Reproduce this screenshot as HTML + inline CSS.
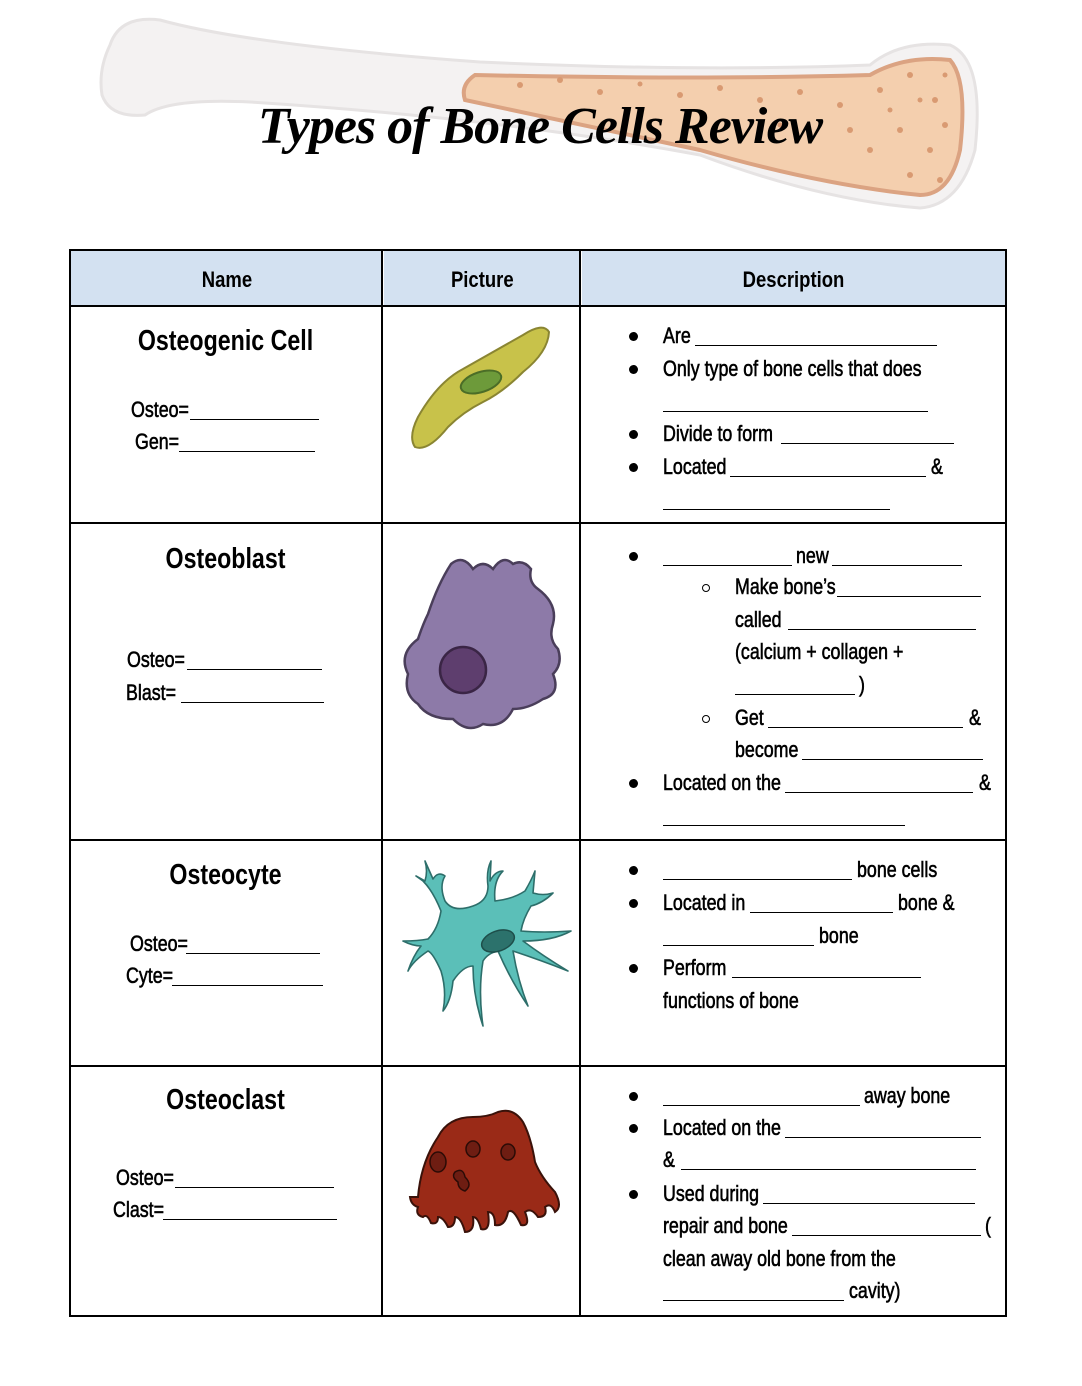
<!DOCTYPE html>
<html><head><meta charset="utf-8"><style>
body{margin:0;background:#fff;width:1082px;height:1386px;position:relative;overflow:hidden;font-family:"Liberation Sans Narrow","Liberation Sans",sans-serif;color:#000}
.t{position:absolute;font-size:22px;line-height:26px;white-space:nowrap;-webkit-text-stroke:0.6px #000;transform:scaleX(0.81);transform-origin:left center}
.h{position:absolute;font-size:29px;font-weight:bold;line-height:34px;width:313px;text-align:center;left:69px;transform:scaleX(0.8);transform-origin:center}
.b{position:absolute;height:0;border-top:1.6px solid #000}
.d{position:absolute;width:9px;height:9px;border-radius:50%;background:#000}
.o{position:absolute;width:8px;height:8px;border-radius:50%;border:1.3px solid #000;box-sizing:border-box}
.v{position:absolute;background:#000}
.th{position:absolute;top:251px;height:54px;background:#d3e1f1;font-weight:bold;font-size:22px;line-height:58px;text-align:center}
.th span{display:inline-block;transform:scaleX(0.84)}
</style></head><body>
<svg style="position:absolute;left:0;top:0" width="1082" height="215">
<path d="M110 45 Q120 15 160 20 Q250 45 480 62 Q700 72 870 65 Q900 40 950 45 Q985 60 975 150 Q960 205 920 208 Q820 200 700 155 Q500 118 250 102 Q170 98 145 115 Q110 118 102 95 Q98 70 110 45 Z" fill="#f4f2f2" stroke="#e6e3e3" stroke-width="3"/>
<path d="M475 75 Q700 80 870 75 Q905 55 950 60 Q968 80 960 150 Q950 195 920 195 Q820 185 700 150 Q560 120 465 100 Q460 85 475 75 Z" fill="#f4cfae" stroke="#dba382" stroke-width="4"/>
<g fill="#d99a72">
<circle cx="520" cy="85" r="3"/><circle cx="560" cy="80" r="3"/><circle cx="600" cy="92" r="3"/><circle cx="640" cy="84" r="2.5"/><circle cx="680" cy="95" r="3"/><circle cx="720" cy="88" r="3"/><circle cx="760" cy="100" r="3"/><circle cx="800" cy="92" r="3"/><circle cx="840" cy="105" r="3"/><circle cx="880" cy="90" r="3"/><circle cx="910" cy="75" r="3"/><circle cx="935" cy="100" r="3"/><circle cx="900" cy="130" r="3"/><circle cx="930" cy="150" r="3"/><circle cx="870" cy="150" r="3"/><circle cx="910" cy="175" r="3"/><circle cx="945" cy="125" r="3"/><circle cx="850" cy="130" r="3"/><circle cx="780" cy="125" r="2.5"/><circle cx="940" cy="180" r="3"/><circle cx="920" cy="100" r="2.5"/><circle cx="890" cy="110" r="2.5"/><circle cx="945" cy="75" r="2.5"/>
</g>
<text x="540" y="143" text-anchor="middle" font-family="Liberation Serif" font-style="italic" font-weight="bold" font-size="52" letter-spacing="-1">Types of Bone Cells Review</text>
</svg>

<div class="th" style="left:71px;width:311px"><span>Name</span></div>
<div class="th" style="left:384px;width:196px"><span>Picture</span></div>
<div class="th" style="left:582px;width:423px"><span>Description</span></div>
<div class="v" style="left:69px;top:249px;width:938px;height:2px"></div>
<div class="v" style="left:69px;top:305px;width:938px;height:2px"></div>
<div class="v" style="left:69px;top:522px;width:938px;height:2px"></div>
<div class="v" style="left:69px;top:839px;width:938px;height:2px"></div>
<div class="v" style="left:69px;top:1065px;width:938px;height:2px"></div>
<div class="v" style="left:69px;top:1315px;width:938px;height:2px"></div>
<div class="v" style="left:69px;top:249px;width:2px;height:1068px"></div>
<div class="v" style="left:381px;top:249px;width:2px;height:1068px"></div>
<div class="v" style="left:579px;top:249px;width:2px;height:1068px"></div>
<div class="v" style="left:1005px;top:249px;width:2px;height:1068px"></div>

<div class="h" style="top:324px">Osteogenic Cell</div>
<div class="t" style="left:131px;top:397px">Osteo=</div><div class="b" style="left:190px;width:129px;top:419px"></div>
<div class="t" style="left:135px;top:429px">Gen=</div><div class="b" style="left:179px;width:136px;top:451px"></div>

<div class="h" style="top:542px">Osteoblast</div>
<div class="t" style="left:127px;top:647px">Osteo=</div><div class="b" style="left:187px;width:135px;top:669px"></div>
<div class="t" style="left:126px;top:680px">Blast=</div><div class="b" style="left:181px;width:143px;top:702px"></div>

<div class="h" style="top:858px">Osteocyte</div>
<div class="t" style="left:130px;top:931px">Osteo=</div><div class="b" style="left:186px;width:134px;top:953px"></div>
<div class="t" style="left:126px;top:963px">Cyte=</div><div class="b" style="left:172px;width:151px;top:985px"></div>

<div class="h" style="top:1083px">Osteoclast</div>
<div class="t" style="left:116px;top:1165px">Osteo=</div><div class="b" style="left:175px;width:159px;top:1187px"></div>
<div class="t" style="left:113px;top:1197px">Clast=</div><div class="b" style="left:163px;width:174px;top:1219px"></div>

<svg style="position:absolute;left:383px;top:307px" width="196" height="215">
<path d="M32 140 Q25 130 35 110 Q55 75 80 62 Q110 45 140 28 Q160 15 166 25 Q165 45 140 65 Q120 85 100 95 Q80 105 65 120 Q45 145 32 140Z" fill="#c8c24a" stroke="#8a8532" stroke-width="2"/>
<ellipse cx="98" cy="75" rx="21" ry="10" transform="rotate(-18 98 75)" fill="#6d9a3a" stroke="#4b6d27" stroke-width="2"/>
</svg>
<svg style="position:absolute;left:383px;top:524px" width="196" height="315">
<path d="M68 40 Q80 30 90 45 Q100 35 110 45 Q120 30 130 40 Q140 35 148 45 Q145 58 155 65 Q175 80 170 100 Q165 115 175 125 Q180 140 170 150 Q178 170 160 175 Q145 185 130 185 Q120 205 100 200 Q85 210 70 195 Q45 195 35 180 Q20 170 25 150 Q15 130 35 115 Q40 100 45 90 Q55 60 68 40Z" fill="#8d7aa8" stroke="#4a3e5a" stroke-width="2.5"/>
<ellipse cx="80" cy="146" rx="23" ry="23" fill="#5e3e6e" stroke="#3a2545" stroke-width="2.5"/>
</svg>
<svg style="position:absolute;left:383px;top:841px" width="196" height="224">
<g fill="#5bbfb8" stroke="#2d6e6a" stroke-width="1.6" stroke-linejoin="round">
<path d="M58 70 Q50 50 40 40 L33 35 L42 40 Q45 30 42 20 L50 38 Q55 30 62 35 Q56 45 62 60 Q70 72 90 65 Q105 60 105 45 Q103 30 108 20 L107 40 Q112 30 120 30 Q110 40 112 60 Q130 58 142 50 Q148 40 152 30 L150 52 Q160 55 170 52 Q160 62 148 65 Q140 78 138 90 Q160 92 188 90 Q170 100 140 100 Q160 115 185 130 Q160 120 130 110 Q135 140 145 165 Q128 140 115 110 Q105 112 100 120 Q95 150 100 185 Q90 155 90 125 Q80 125 70 140 Q68 160 60 170 Q64 150 58 130 Q50 112 45 110 Q30 120 25 130 Q30 115 38 105 Q30 105 20 100 Q35 100 45 98 Q55 88 58 70Z"/>
</g>
<ellipse cx="115" cy="100" rx="17" ry="10" transform="rotate(-20 115 100)" fill="#2c726c" stroke="#1e4e4a" stroke-width="1.5"/>
</svg>
<svg style="position:absolute;left:383px;top:1067px" width="196" height="248">
<path d="M35 130 Q38 95 55 70 Q65 50 90 50 Q105 50 115 45 Q130 40 140 55 Q148 70 152 95 Q158 110 172 125 Q180 140 172 145 Q168 135 162 140 Q165 150 155 150 Q148 140 142 145 Q148 160 138 158 Q130 140 125 145 Q122 160 112 158 Q112 145 105 145 Q108 165 98 162 Q95 150 90 150 Q92 165 82 165 Q78 150 72 150 Q72 160 65 160 Q60 150 55 150 Q55 158 48 156 Q44 146 40 150 Q32 148 35 140 Q28 138 27 130Z" fill="#9a2a17" stroke="#3a120a" stroke-width="2"/>
<g fill="#6e1d12" stroke="#2b0b06" stroke-width="1.5">
<ellipse cx="55" cy="95" rx="8" ry="10"/><ellipse cx="90" cy="82" rx="7" ry="8"/><ellipse cx="125" cy="85" rx="7" ry="8"/><path d="M72 105 Q80 100 82 110 Q90 118 82 124 Q75 122 75 115 Q68 110 72 105Z"/>
</g>
</svg>

<div class="d" style="left:629px;top:332px"></div><div class="t" style="left:663px;top:323px">Are</div><div class="b" style="left:695px;width:242px;top:345px"></div>
<div class="d" style="left:629px;top:365px"></div><div class="t" style="left:663px;top:356px">Only type of bone cells that does</div>
<div class="b" style="left:663px;width:265px;top:411px"></div>
<div class="d" style="left:629px;top:430px"></div><div class="t" style="left:663px;top:421px">Divide to form</div><div class="b" style="left:781px;width:173px;top:443px"></div>
<div class="d" style="left:629px;top:463px"></div><div class="t" style="left:663px;top:454px">Located</div><div class="b" style="left:730px;width:196px;top:476px"></div><div class="t" style="left:931px;top:454px">&amp;</div>
<div class="b" style="left:663px;width:227px;top:509px"></div>

<div class="d" style="left:629px;top:552px"></div><div class="b" style="left:663px;width:129px;top:565px"></div><div class="t" style="left:796px;top:543px">new</div><div class="b" style="left:832px;width:130px;top:565px"></div>
<div class="o" style="left:702px;top:584px"></div><div class="t" style="left:735px;top:574px">Make bone’s</div><div class="b" style="left:837px;width:144px;top:596px"></div>
<div class="t" style="left:735px;top:607px">called</div><div class="b" style="left:788px;width:188px;top:629px"></div>
<div class="t" style="left:735px;top:639px">(calcium + collagen +</div>
<div class="b" style="left:735px;width:120px;top:694px"></div><div class="t" style="left:859px;top:672px">)</div>
<div class="o" style="left:702px;top:715px"></div><div class="t" style="left:735px;top:705px">Get</div><div class="b" style="left:768px;width:195px;top:727px"></div><div class="t" style="left:969px;top:705px">&amp;</div>
<div class="t" style="left:735px;top:737px">become</div><div class="b" style="left:802px;width:181px;top:759px"></div>
<div class="d" style="left:629px;top:779px"></div><div class="t" style="left:663px;top:770px">Located on the</div><div class="b" style="left:785px;width:188px;top:792px"></div><div class="t" style="left:979px;top:770px">&amp;</div>
<div class="b" style="left:663px;width:242px;top:825px"></div>

<div class="d" style="left:629px;top:866px"></div><div class="b" style="left:663px;width:189px;top:879px"></div><div class="t" style="left:857px;top:857px">bone cells</div>
<div class="d" style="left:629px;top:899px"></div><div class="t" style="left:663px;top:890px">Located in</div><div class="b" style="left:750px;width:143px;top:912px"></div><div class="t" style="left:898px;top:890px">bone &amp;</div>
<div class="b" style="left:663px;width:151px;top:945px"></div><div class="t" style="left:819px;top:923px">bone</div>
<div class="d" style="left:629px;top:964px"></div><div class="t" style="left:663px;top:955px">Perform</div><div class="b" style="left:732px;width:189px;top:977px"></div>
<div class="t" style="left:663px;top:988px">functions of bone</div>

<div class="d" style="left:629px;top:1092px"></div><div class="b" style="left:663px;width:197px;top:1105px"></div><div class="t" style="left:864px;top:1083px">away bone</div>
<div class="d" style="left:629px;top:1124px"></div><div class="t" style="left:663px;top:1115px">Located on the</div><div class="b" style="left:785px;width:196px;top:1137px"></div>
<div class="t" style="left:663px;top:1147px">&amp;</div><div class="b" style="left:681px;width:295px;top:1169px"></div>
<div class="d" style="left:629px;top:1190px"></div><div class="t" style="left:663px;top:1181px">Used during</div><div class="b" style="left:763px;width:212px;top:1203px"></div>
<div class="t" style="left:663px;top:1213px">repair and bone</div><div class="b" style="left:792px;width:189px;top:1235px"></div><div class="t" style="left:985px;top:1213px">(</div>
<div class="t" style="left:663px;top:1246px">clean away old bone from the</div>
<div class="b" style="left:663px;width:181px;top:1300px"></div><div class="t" style="left:849px;top:1278px">cavity)</div>
</body></html>
